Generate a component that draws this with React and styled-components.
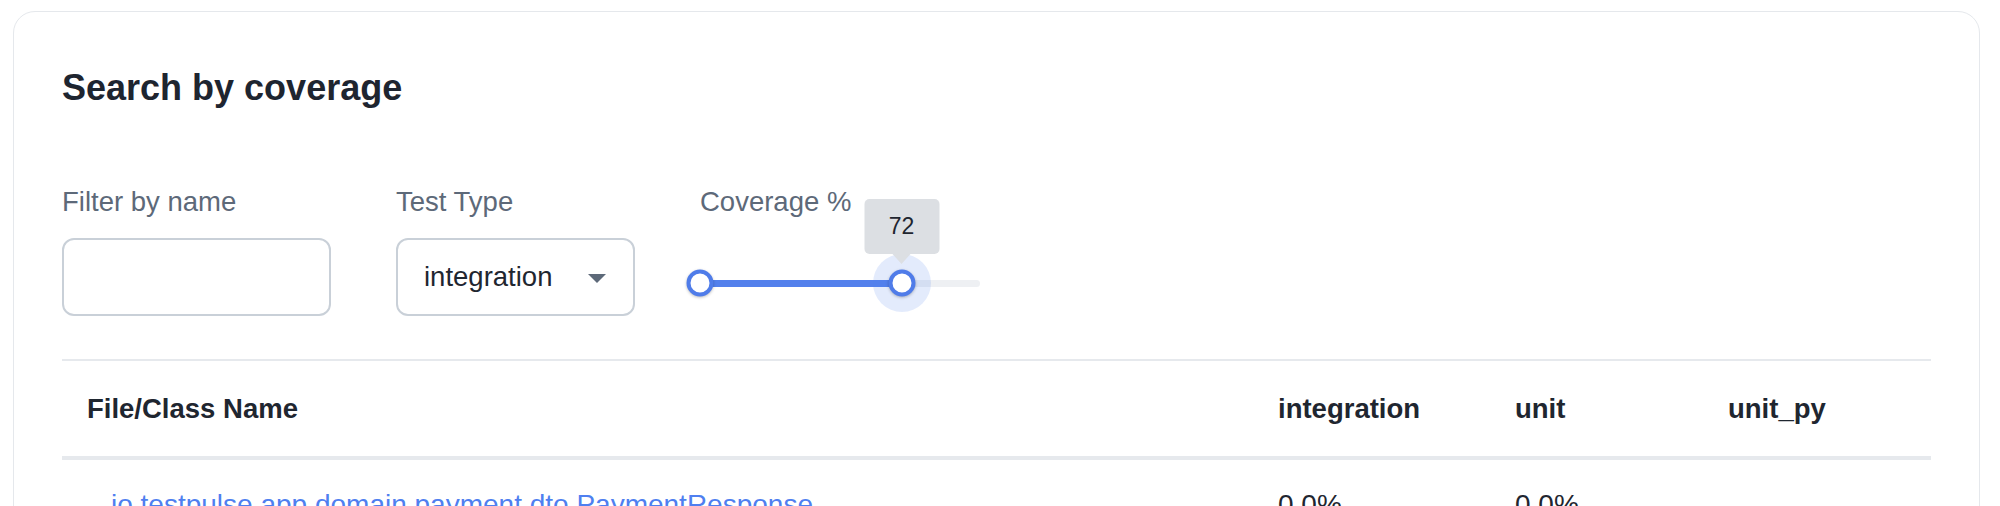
import React from "react";
import styled, { createGlobalStyle } from "styled-components";

const GlobalStyle = createGlobalStyle`
  html, body { margin: 0; padding: 0; background: #ffffff; }
  body {
    font-family: "Liberation Sans", Arial, Helvetica, sans-serif;
    color: #1f2630;
  }
  * { box-sizing: border-box; }
`;

const Page = styled.div`
  padding: 11px 20px 0 13px;
`;

const Card = styled.section`
  border: 1px solid #e5e8ec;
  border-radius: 22px;
  padding: 54px 48px 40px 48px;
  background: #fff;
`;

const Title = styled.h2`
  margin: 0;
  font-size: 36px;
  line-height: 43px;
  font-weight: 700;
  color: #1e2530;
`;

const Filters = styled.div`
  display: flex;
  align-items: flex-start;
  gap: 65px;
  margin-top: 77px;
`;

const Field = styled.div`
  display: flex;
  flex-direction: column;
  width: ${(p) => p.$width}px;
`;

const Label = styled.label`
  font-size: 27.5px;
  line-height: 32px;
  color: #5d6979;
  white-space: nowrap;
  margin-bottom: 20px;
`;

const TextInput = styled.input`
  height: 78px;
  width: 100%;
  border: 2px solid #c9d0d8;
  border-radius: 12px;
  background: #fff;
  font: inherit;
  font-size: 27.5px;
  padding: 0 26px;
  outline: none;
`;

const Select = styled.div`
  height: 78px;
  width: 100%;
  border: 2px solid #c9d0d8;
  border-radius: 12px;
  display: flex;
  align-items: center;
  justify-content: space-between;
  padding: 0 27px 0 26px;
  font-size: 27.5px;
  line-height: 32px;
  color: #1f2630;
`;

const Caret = styled.span`
  width: 0;
  height: 0;
  border-left: 9.5px solid transparent;
  border-right: 9.5px solid transparent;
  border-top: 9px solid #5d6979;
  margin-top: 2px;
`;

const SliderBox = styled.div`
  position: relative;
  height: 78px;
  padding-top: 12px;
  display: flex;
  align-items: center;
`;

const Rail = styled.div`
  position: relative;
  width: 100%;
  height: 7px;
  border-radius: 4px;
  background: #eef0f3;
`;

const Track = styled.div`
  position: absolute;
  left: 0;
  top: 0;
  height: 7px;
  border-radius: 4px;
  background: #5380ec;
`;

const Halo = styled.div`
  position: absolute;
  top: 50%;
  width: 58px;
  height: 58px;
  border-radius: 50%;
  background: rgba(83, 128, 236, 0.16);
  transform: translate(-50%, -50%);
`;

const Thumb = styled.div`
  position: absolute;
  top: 50%;
  width: 27px;
  height: 27px;
  border-radius: 50%;
  background: #fff;
  border: 4px solid #4f7ce9;
  box-shadow: 0 1px 3px rgba(0, 0, 0, 0.25);
  transform: translate(-50%, -50%);
`;

const Tip = styled.div`
  position: absolute;
  bottom: 33px;
  transform: translateX(-50%);
  width: 75px;
  height: 55px;
  border-radius: 5px;
  background: #dcdfe3;
  color: #1f2630;
  font-size: 23px;
  display: flex;
  align-items: center;
  justify-content: center;

  &::after {
    content: "";
    position: absolute;
    left: 50%;
    bottom: -10px;
    transform: translateX(-50%);
    border-left: 9px solid transparent;
    border-right: 9px solid transparent;
    border-top: 10px solid #dcdfe3;
  }
`;

const Table = styled.div`
  margin-top: 43px;
  border-top: 2px solid #e6e9ed;
`;

const Row = styled.div`
  display: grid;
  grid-template-columns: 1191px 237px 213px 227px;
  border-bottom: ${(p) => (p.$head ? "4px solid #e6e9ed" : "1px solid #eef0f3")};
`;

const Cell = styled.div`
  padding: ${(p) => (p.$head ? "32px 0 31px 25px" : "29px 0 29px 25px")};
  font-size: ${(p) => (p.$head ? "27.5px" : "28px")};
  line-height: 32px;
  font-weight: ${(p) => (p.$head ? 700 : 400)};
  color: #1f2630;
  white-space: nowrap;
`;

const NameLink = styled.a`
  display: inline-block;
  padding-left: 24px;
  color: #4f7ff0;
  text-decoration: none;
`;

function RangeSlider({ low, high }) {
  return (
    <SliderBox>
      <Rail>
        <Track style={{ left: `${low}%`, width: `${high - low}%` }} />
        <Halo style={{ left: `${high}%` }} />
        <Thumb style={{ left: `${low}%` }} />
        <Thumb style={{ left: `${high}%` }} />
        <Tip style={{ left: `${high}%` }}>{high}</Tip>
      </Rail>
    </SliderBox>
  );
}

const rows = [
  { name: "io.testpulse.app.domain.payment.dto.PaymentResponse", integration: "0.0%", unit: "0.0%", unit_py: "" },
];

export default function App() {
  return (
    <>
      <GlobalStyle />
      <Page>
        <Card>
          <Title>Search by coverage</Title>
          <Filters>
            <Field $width={269}>
              <Label>Filter by name</Label>
              <TextInput type="text" />
            </Field>
            <Field $width={239}>
              <Label>Test Type</Label>
              <Select>
                <span>integration</span>
                <Caret />
              </Select>
            </Field>
            <Field $width={280}>
              <Label>Coverage %</Label>
              <RangeSlider low={0} high={72} />
            </Field>
          </Filters>
          <Table>
            <Row $head>
              <Cell $head>File/Class Name</Cell>
              <Cell $head>integration</Cell>
              <Cell $head>unit</Cell>
              <Cell $head>unit_py</Cell>
            </Row>
            {rows.map((r) => (
              <Row key={r.name}>
                <Cell>
                  <NameLink href="#">{r.name}</NameLink>
                </Cell>
                <Cell>{r.integration}</Cell>
                <Cell>{r.unit}</Cell>
                <Cell>{r.unit_py}</Cell>
              </Row>
            ))}
          </Table>
        </Card>
      </Page>
    </>
  );
}
